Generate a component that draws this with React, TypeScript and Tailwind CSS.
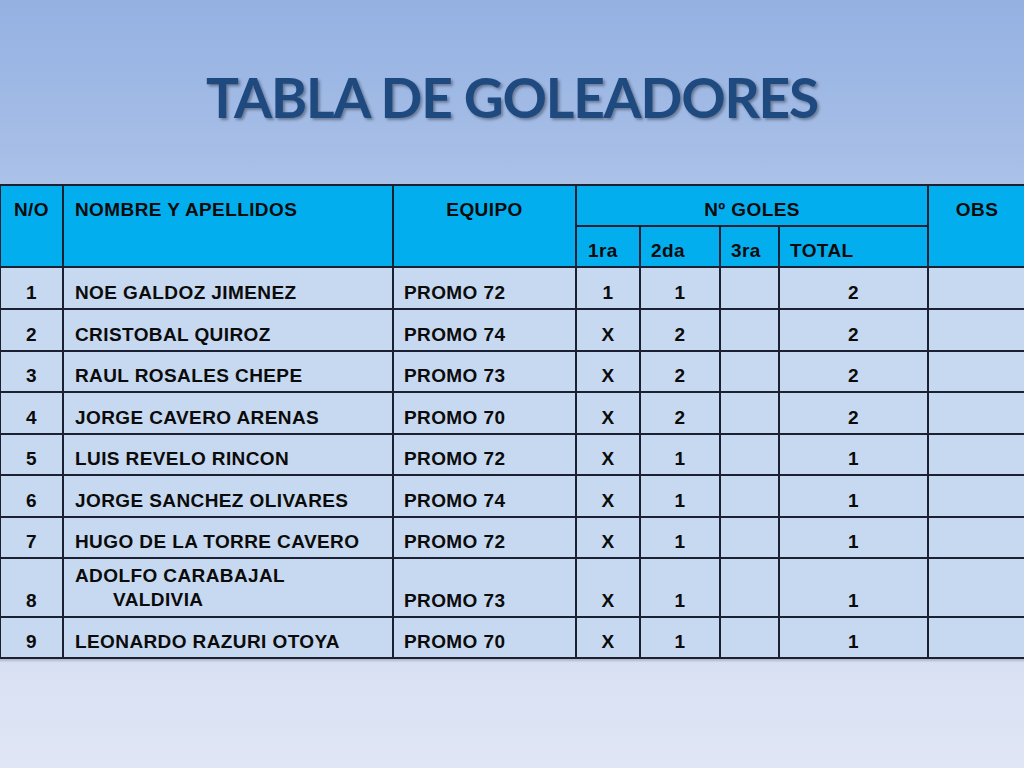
import React from "react";

type Row = {
  n: string;
  name: React.ReactNode;
  team: string;
  a: string;
  b: string;
  c: string;
  total: string;
  h: string;
};

const rows: Row[] = [
  { n: "1", name: "NOE GALDOZ JIMENEZ", team: "PROMO 72", a: "1", b: "1", c: "", total: "2", h: "h-[42px]" },
  { n: "2", name: "CRISTOBAL QUIROZ", team: "PROMO 74", a: "X", b: "2", c: "", total: "2", h: "h-[42px]" },
  { n: "3", name: "RAUL ROSALES CHEPE", team: "PROMO 73", a: "X", b: "2", c: "", total: "2", h: "h-[41px]" },
  { n: "4", name: "JORGE CAVERO ARENAS", team: "PROMO 70", a: "X", b: "2", c: "", total: "2", h: "h-[42px]" },
  { n: "5", name: "LUIS REVELO RINCON", team: "PROMO 72", a: "X", b: "1", c: "", total: "1", h: "h-[41px]" },
  { n: "6", name: "JORGE SANCHEZ OLIVARES", team: "PROMO 74", a: "X", b: "1", c: "", total: "1", h: "h-[42px]" },
  { n: "7", name: "HUGO DE LA TORRE CAVERO", team: "PROMO 72", a: "X", b: "1", c: "", total: "1", h: "h-[41px]" },
  {
    n: "8",
    name: (
      <div className="leading-[24px]">
        <div>ADOLFO CARABAJAL</div>
        <div className="pl-[38px]">VALDIVIA</div>
      </div>
    ),
    team: "PROMO 73",
    a: "X",
    b: "1",
    c: "",
    total: "1",
    h: "h-[59px]",
  },
  { n: "9", name: "LEONARDO RAZURI OTOYA", team: "PROMO 70", a: "X", b: "1", c: "", total: "1", h: "h-[41px]" },
];

const cell = "border-2 border-[#1b2133] align-bottom pb-[4px] leading-[22px]";
const topCell = "border-2 border-[#1b2133] align-top pt-[13px] leading-[22px] font-bold";

export default function App() {
  return (
    <div
      className="w-[1024px] h-[768px] overflow-hidden bg-gradient-to-b from-[#94b1e2] via-[#c3d2ee] to-[#e0e6f5]"
      style={{ fontFamily: '"Liberation Sans", Arial, sans-serif' }}
    >
      <div className="h-[184px] flex items-start justify-center pt-[61px]">
        <h1
          className="text-[55px] font-bold text-[#1f4a7f] leading-[72px] tracking-[-1.2px] [text-shadow:2px_2px_3px_rgba(0,0,0,0.35)]"
          style={{ fontFamily: 'Lato, "Open Sans", sans-serif' }}
        >
          TABLA DE GOLEADORES
        </h1>
      </div>
      <table className="border-collapse table-fixed w-[1026px] -ml-[1px] text-[19px] tracking-[0.4px] font-bold text-[#0b0b0b] shadow-[0_2px_2px_rgba(0,0,0,0.18)]">
        <colgroup>
          <col className="w-[63px]" />
          <col className="w-[330px]" />
          <col className="w-[183px]" />
          <col className="w-[64px]" />
          <col className="w-[80px]" />
          <col className="w-[59px]" />
          <col className="w-[149px]" />
          <col className="w-[98px]" />
        </colgroup>
        <thead className="bg-[#03aeef]">
          <tr className="h-[41px]">
            <th rowSpan={2} className={`${topCell} text-center`}>
              N/O
            </th>
            <th rowSpan={2} className={`${topCell} text-left pl-[11px]`}>
              NOMBRE Y APELLIDOS
            </th>
            <th rowSpan={2} className={`${topCell} text-center`}>
              EQUIPO
            </th>
            <th colSpan={4} className={`${cell} font-bold text-center`}>
              Nº GOLES
            </th>
            <th rowSpan={2} className={`${topCell} text-center`}>
              OBS
            </th>
          </tr>
          <tr className="h-[41px]">
            <th className={`${cell} font-bold text-left pl-[11px]`}>1ra</th>
            <th className={`${cell} font-bold text-left pl-[10px]`}>2da</th>
            <th className={`${cell} font-bold text-left pl-[10px]`}>3ra</th>
            <th className={`${cell} font-bold text-left pl-[10px]`}>TOTAL</th>
          </tr>
        </thead>
        <tbody className="bg-[#c7d9f1]">
          {rows.map((r) => (
            <tr key={r.n} className={r.h}>
              <td className={`${cell} text-center`}>{r.n}</td>
              <td className={`${cell} text-left pl-[11px]`}>{r.name}</td>
              <td className={`${cell} text-left pl-[10px]`}>{r.team}</td>
              <td className={`${cell} text-center`}>{r.a}</td>
              <td className={`${cell} text-center`}>{r.b}</td>
              <td className={`${cell} text-center`}>{r.c}</td>
              <td className={`${cell} text-center`}>{r.total}</td>
              <td className={cell}></td>
            </tr>
          ))}
        </tbody>
      </table>
    </div>
  );
}
